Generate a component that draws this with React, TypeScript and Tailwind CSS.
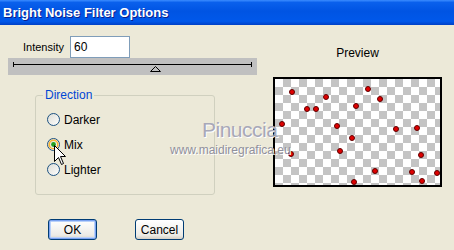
const dots: [number, number][] = [
  [19, 15], [53, 20], [34, 32], [43, 32], [95, 12], [107, 22], [83, 29],
  [9, 47], [64, 49], [123, 52], [144, 51], [79, 61], [18, 77], [67, 74],
  [148, 78], [102, 94], [139, 95], [164, 96], [81, 105], [149, 104],
];

function Radio({ checked, hover }: { checked?: boolean; hover?: boolean }) {
  return (
    <svg width="13" height="13" viewBox="0 0 13 13" className="shrink-0">
      <defs>
        <linearGradient id="rfill" x1="0" y1="0" x2="1" y2="1">
          <stop offset="0" stopColor="#dcdcd4" />
          <stop offset="1" stopColor="#ffffff" />
        </linearGradient>
      </defs>
      <circle cx="6.5" cy="6.5" r="6" fill="url(#rfill)" stroke="#1c5180" />
      {hover && <circle cx="6.5" cy="6.5" r="4.3" fill="none" stroke="#f8b636" strokeWidth="1.6" />}
      {checked && <circle cx="6.5" cy="6.5" r="2.4" fill="#21a121" />}
    </svg>
  );
}

export default function App() {
  return (
    <div className="relative w-[454px] h-[250px] overflow-hidden bg-[#ece9d8] font-['Liberation_Sans',Arial,sans-serif] text-[11px] text-black">
      {/* Title bar */}
      <div className="h-[25px] flex items-center pl-[3px] bg-[linear-gradient(to_bottom,#3b8cff_0%,#0a60ec_10%,#0054e3_45%,#0058ea_85%,#0040c6_100%)]">
        <span className="text-white font-bold text-[13px] leading-none [text-shadow:1px_1px_0_#0a1e8c]">
          Bright Noise Filter Options
        </span>
      </div>

      <div className="flex">
        {/* Left column */}
        <div className="w-[262px]">
          <div className="mt-[11px] flex items-center pl-[23px]">
            <span>Intensity</span>
            <div className="ml-[6px] w-[60px] h-[22px] bg-white border border-[#7f9db9] pl-[3px] flex items-center text-[12px]">
              60
            </div>
          </div>

          <div className="ml-[8px] w-[249px] h-[17px] bg-[#c0c0c0]">
            <svg width="249" height="17" viewBox="0 0 249 17">
              <line x1="5" y1="6.5" x2="244" y2="6.5" stroke="#000" />
              <line x1="5.5" y1="4" x2="5.5" y2="9" stroke="#000" />
              <line x1="243.5" y1="4" x2="243.5" y2="9" stroke="#000" />
              <polygon points="147.5,8.5 142.5,13.5 152.5,13.5" fill="#c0c0c0" stroke="#000" />
            </svg>
          </div>

          {/* Direction group */}
          <div className="relative mt-[20px] ml-[35px] w-[180px] h-[100px] rounded-[3px] border border-[#d0d0bf]">
            <span className="absolute -top-[7px] left-[7px] px-[2px] bg-[#ece9d8] text-[#0046d5] text-[12px] leading-[13px]">
              Direction
            </span>
            <div className="flex flex-col pt-[11px] pl-[11px]">
              <div className="h-[25px] flex items-center gap-[4px]">
                <Radio />
                <span className="text-[12px]">Darker</span>
              </div>
              <div className="h-[25px] flex items-center gap-[4px]">
                <Radio checked hover />
                <span className="text-[12px]">Mix</span>
              </div>
              <div className="h-[25px] flex items-center gap-[4px]">
                <Radio />
                <span className="text-[12px]">Lighter</span>
              </div>
            </div>
          </div>

          <div className="mt-[24px] ml-[48px] flex gap-[38px]">
            <button className="w-[49px] h-[21px] rounded-[3px] border border-[#003c74] bg-[linear-gradient(to_bottom,#ffffff,#ecebe6_80%,#d6d0c5)] shadow-[inset_0_0_0_1px_#7aa2f0,inset_0_0_0_2px_#b9d1fa] text-[12px]">
              OK
            </button>
            <button className="w-[49px] h-[21px] rounded-[3px] border border-[#003c74] bg-[linear-gradient(to_bottom,#ffffff,#ecebe6_80%,#d6d0c5)] text-[12px]">
              Cancel
            </button>
          </div>
        </div>

        {/* Right column */}
        <div className="pl-[11px]">
          <div className="mt-[22px] w-[169px] text-center text-[12px] leading-[13px]">Preview</div>
          <div className="relative mt-[17px] w-[169px] h-[110px] border-2 border-black bg-[conic-gradient(#c4c4c4_25%,#fff_0_50%,#c4c4c4_0_75%,#fff_0)] bg-[length:16px_16px]">
            {dots.map(([x, y], i) => (
              <div
                key={i}
                className="absolute w-[6px] h-[6px] rounded-full bg-[#e00000] border border-[#600000]"
                style={{ left: x - 5, top: y - 5 }}
              />
            ))}
          </div>
        </div>
      </div>

      {/* Watermark */}
      <div className="absolute left-[202px] top-[118px] text-[21px] leading-[24px] tracking-[-0.5px] text-[#a8a8b8] [text-shadow:1px_1px_0_#ffffff]">
        Pinuccia
      </div>
      <div className="absolute left-[170px] top-[143px] text-[12px] leading-[14px] text-[#90909c] [text-shadow:1px_1px_0_#ffffff]">
        www.maidiregrafica.eu
      </div>

      {/* Mouse cursor */}
      <svg className="absolute left-[54px] top-[145px]" width="13" height="21" viewBox="0 0 13 21">
        <path d="M0.5 0.5 L0.5 16.5 L4.5 12.5 L7.5 19.5 L9.5 18.5 L6.5 11.5 L11.5 11.5 Z" fill="#fff" stroke="#000" strokeLinejoin="miter" />
      </svg>
    </div>
  );
}
